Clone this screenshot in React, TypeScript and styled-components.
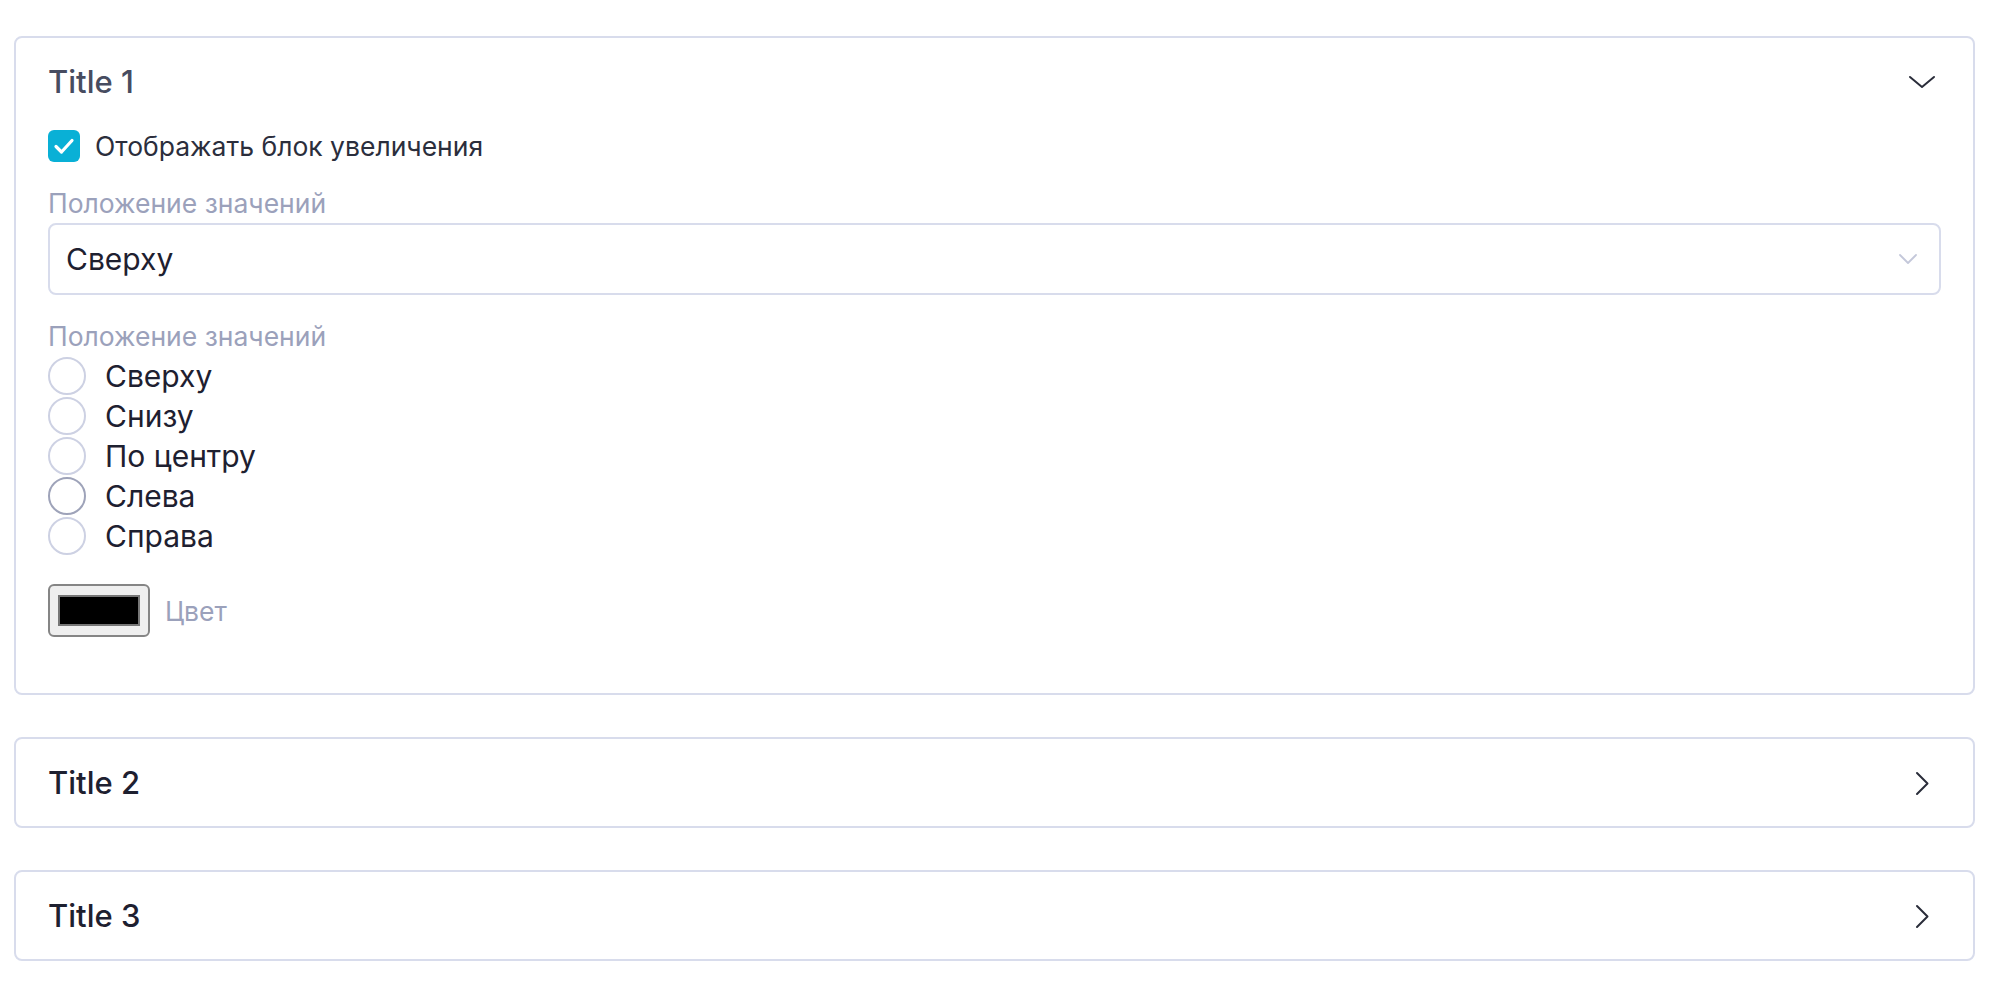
import React, { useState } from "react";
import styled, { createGlobalStyle } from "styled-components";

const GlobalStyle = createGlobalStyle`
  body {
    margin: 0;
    background: #ffffff;
    font-family: Inter, "Noto Sans", sans-serif;
  }
`;

const positions = ["Сверху", "Снизу", "По центру", "Слева", "Справа"];

const ChevronDown = () => (
  <svg width="32" height="32" viewBox="0 0 32 32" fill="none">
    <polyline points="4,11 16,21 28,11" stroke="#2a2d3a" strokeWidth="2" strokeLinecap="round" strokeLinejoin="round" />
  </svg>
);

const ChevronRight = () => (
  <svg width="32" height="32" viewBox="0 0 32 32" fill="none">
    <polyline points="11,6 21.5,16.5 11,27" stroke="#2a2d3a" strokeWidth="2" strokeLinecap="round" strokeLinejoin="round" />
  </svg>
);

const SelectChevron = () => (
  <svg width="18" height="10" viewBox="0 0 18 10" fill="none">
    <polyline points="1,1 9,9 17,1" stroke="#c4c8da" strokeWidth="1.8" strokeLinecap="round" strokeLinejoin="round" />
  </svg>
);

const CheckMark = () => (
  <svg width="32" height="32" viewBox="0 0 32 32" fill="none">
    <polyline points="8,16.5 13.5,22 24,10.5" stroke="#ffffff" strokeWidth="3.2" strokeLinecap="round" strokeLinejoin="round" />
  </svg>
);

const App: React.FC = () => {
  const [open, setOpen] = useState<number | null>(0);
  const [zoomBlock, setZoomBlock] = useState(true);
  const [position, setPosition] = useState("");
  const [color, setColor] = useState("#000000");

  const toggle = (i: number) => setOpen(open === i ? null : i);

  return (
    <>
      <GlobalStyle />
      <Page>
        <Card>
          <Header $open={open === 0} onClick={() => toggle(0)}>
            <span>Title 1</span>
            <IconBox>{open === 0 ? <ChevronDown /> : <ChevronRight />}</IconBox>
          </Header>
          {open === 0 && (
            <Body>
              <CheckRow onClick={() => setZoomBlock(!zoomBlock)}>
                <CheckBox $checked={zoomBlock}>{zoomBlock && <CheckMark />}</CheckBox>
                Отображать блок увеличения
              </CheckRow>

              <Field>
                <FieldLabel>Положение значений</FieldLabel>
                <SelectBox>
                  <span>Сверху</span>
                  <SelectChevron />
                </SelectBox>
              </Field>

              <Field>
                <FieldLabel>Положение значений</FieldLabel>
                <RadioList>
                  {positions.map((item) => (
                    <RadioRow key={item} onClick={() => setPosition(item)}>
                      <RadioCircle $hover={item === "Слева"} $checked={position === item} />
                      {item}
                    </RadioRow>
                  ))}
                </RadioList>
              </Field>

              <ColorRow>
                <ColorInput type="color" value={color} onChange={(e) => setColor(e.target.value)} />
                <FieldLabel>Цвет</FieldLabel>
              </ColorRow>
            </Body>
          )}
        </Card>

        {["Title 2", "Title 3"].map((title, idx) => (
          <Card key={title}>
            <Header $open={open === idx + 1} onClick={() => toggle(idx + 1)}>
              <span>{title}</span>
              <IconBox>{open === idx + 1 ? <ChevronDown /> : <ChevronRight />}</IconBox>
            </Header>
          </Card>
        ))}
      </Page>
    </>
  );
};

export default App;

const Page = styled.div`
  display: flex;
  flex-direction: column;
  gap: 42px;
  padding: 36px 25px 40px 14px;
`;

const Card = styled.section`
  border: 2px solid #d8dcec;
  border-radius: 8px;
  background: #ffffff;
`;

const Header = styled.button<{ $open: boolean }>`
  display: flex;
  align-items: center;
  justify-content: space-between;
  width: 100%;
  box-sizing: border-box;
  padding: 26px 35px 25px 32px;
  background: none;
  border: none;
  cursor: pointer;
  font-family: Inter, "Noto Sans", sans-serif;
  font-size: 31px;
  line-height: 36px;
  font-weight: 500;
  text-align: left;
  color: ${(props) => (props.$open ? "#474c60" : "#1e2030")};
`;

const IconBox = styled.span`
  display: flex;
  width: 32px;
  height: 32px;
`;

const Body = styled.div`
  display: flex;
  flex-direction: column;
  gap: 25px;
  padding: 5px 32px 56px;
`;

const CheckRow = styled.label`
  display: flex;
  align-items: center;
  gap: 15px;
  height: 32px;
  font-size: 26.5px;
  color: #2b2e3c;
  cursor: pointer;
`;

const CheckBox = styled.span<{ $checked: boolean }>`
  display: flex;
  align-items: center;
  justify-content: center;
  width: 32px;
  height: 32px;
  box-sizing: border-box;
  border-radius: 6px;
  overflow: hidden;
  background: ${(props) => (props.$checked ? "#09b0d6" : "#ffffff")};
  border: ${(props) => (props.$checked ? "none" : "2px solid #c9cde0")};
`;

const Field = styled.div`
  display: flex;
  flex-direction: column;
  gap: 4px;
`;

const FieldLabel = styled.span`
  font-size: 26.5px;
  line-height: 32px;
  color: #9ba1bb;
`;

const SelectBox = styled.div`
  display: flex;
  align-items: center;
  justify-content: space-between;
  height: 72px;
  box-sizing: border-box;
  padding: 0 22px 0 16px;
  border: 2px solid #d8dcec;
  border-radius: 8px;
  font-size: 30px;
  color: #1e2030;
  cursor: pointer;
`;

const RadioList = styled.div`
  display: flex;
  flex-direction: column;
`;

const RadioRow = styled.label`
  display: flex;
  align-items: center;
  gap: 19px;
  height: 40px;
  font-size: 30px;
  color: #1e2030;
  cursor: pointer;
`;

const RadioCircle = styled.span<{ $hover: boolean; $checked: boolean }>`
  width: 38px;
  height: 38px;
  box-sizing: border-box;
  border-radius: 50%;
  border: 2px solid ${(props) => (props.$hover ? "#9ea3b9" : "#cdd1e3")};
  box-shadow: ${(props) => (props.$checked ? "inset 0 0 0 9px #09b0d6" : "none")};
`;

const ColorRow = styled.div`
  display: flex;
  align-items: center;
  gap: 15px;
  margin-top: 3px;
`;

const ColorInput = styled.input`
  width: 102px;
  height: 53px;
  box-sizing: border-box;
  margin: 0;
  padding: 2px 4px;
  background: #efefef;
  border: 2px solid #858585;
  border-radius: 6px;
  cursor: pointer;

  &::-webkit-color-swatch-wrapper {
    padding: 7px 4px;
  }

  &::-webkit-color-swatch {
    border: 2px solid #777777;
    border-radius: 0;
  }
`;
